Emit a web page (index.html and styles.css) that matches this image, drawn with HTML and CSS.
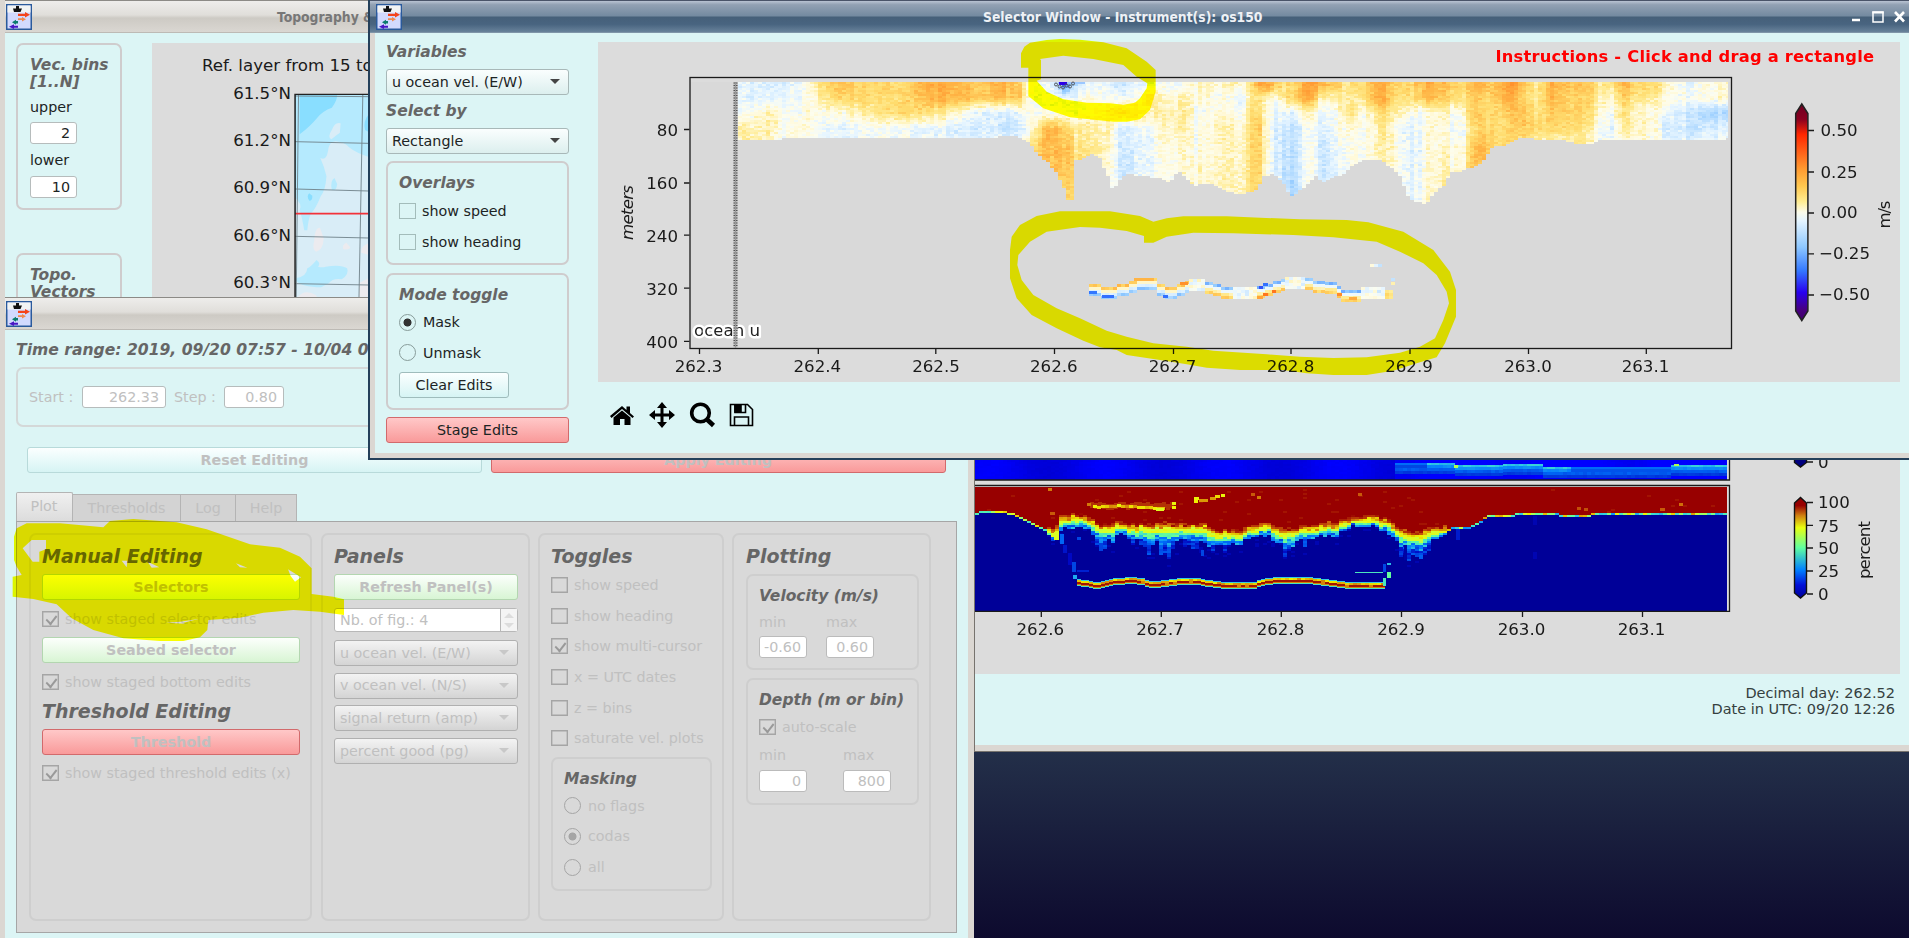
FILE: index.html
```html
<!DOCTYPE html>
<html lang="en">
<head>
<meta charset="utf-8">
<title>ADCP editing</title>
<link rel="stylesheet" href="styles.css">
</head>
<body>
<svg width="0" height="0" class="defs">
  <symbol id="app" viewBox="0 0 26 26">
    <rect x=".75" y=".75" width="24.5" height="24.5" fill="#d2dafe" stroke="#2a5a9c" stroke-width="1.5"/>
    <rect x="1.5" y="1.5" width="23" height="7" fill="#f1f3f4"/>
    <path d="M7 4.5h3V2h3v2.500h3l-1.500 3.500H8z" fill="#111"/>
    <path d="M12 9.700h7V8l5 2.800-5 2.800v-1.700h-7z" fill="#f4441c"/>
    <path d="M12 14.200h4v-1.200l4 2.200-4 2.200V16h-4z" fill="#f08a50"/>
    <path d="M12 17h-2v-1.200l-4 2.500 4 2.500v-1.300h2z" fill="#0d7d6e"/>
    <path d="M12 21.700H8V20.300l-5 2.400L8 25v-1.300h4z" fill="#4a16c4"/>
  </symbol>
</svg>
<main class="desktop">

<section class="win topo">
  <header class="bar"><svg class="ico"><use href="#app"/></svg><span class="bar-title">Topography &amp; Vectors</span></header>
  <div class="topo-body">
    <div class="topo-side">
      <div class="group vec">
        <h4>Vec. bins<br>[1..N]</h4>
        <label>upper</label><div class="field">2</div>
        <label>lower</label><div class="field">10</div>
      </div>
      <div class="group vec2"><h4>Topo.<br>Vectors</h4></div>
    </div>
    <svg class="topo-fig" width="230" height="255" viewBox="152 43 230 255">
      <rect x="152" y="43" width="230" height="255" fill="#dcdcdc"/>
      <g transform="scale(.38272 .33333)">
        <rect x="771" y="283" width="220" height="620" fill="#d9edf7"/>
        <path d="M771 283H962V470q-30-10-50-28q-10-15-35-18q-18 0-20 30q-5 30-20 20q10 25 16 55q-2 40-15 60q-14 40-25 50q-8 20-10 52h-8q-6-40-12-60q8-20-14-40z" fill="#b5eafe"/>
        <path d="M783 283h98q0 20-14 40q-24 10-38 30q-18 25-46 50z" fill="#89deff"/>
        <path d="M962 345q-14 20-8 45l8 5z" fill="#89deff"/>
        <path d="M890 370q-14-6-22 18q-14 25-2 30q12-12 22-20z" fill="#d9edf7"/>
        <path d="M874 534q-12 8-7 35q12 6 14-17z" fill="#b5eafe"/>
        <path d="M808 580q-8 8 0 22q9 0 8-15z" fill="#89deff"/>
        <path d="M771 835q30-2 32-30q10-5 24-25q12 10 4 20q12 4 20 0q40-8 56 5q6 18-14 33q-24-4-34 12q-10 6-20 12q-50 0-68-22z" fill="#b5eafe"/>
        <path d="M836 683q-14 0-15 40q-6 25 5 32q18-4 20-40z M905 728q-12 6-8 20q18 2 18-6z M962 730q-20 10-18 28l18 6z M775 895q20-30 50-10l5 10z M962 835l-24 15v40h24z" fill="#ecebef"/>
        <path d="M771 288l191 2M771 425l191 5M771 567l191 6M771 709l191 5M771 851l191 4M780 283l-6 610M948 283l-10 610" fill="none" stroke="#6f8189" stroke-width="2.500"/>
        <path d="M771 641h200" stroke="#f3323a" stroke-width="5.500"/>
        <path d="M771 900V283h200" fill="none" stroke="#222" stroke-width="4"/>
      </g>
      <g class="mpl">
        <text x="202" y="71">Ref. layer from 15 to 25</text>
        <g text-anchor="end"><text x="291" y="99">61.5°N</text><text x="291" y="146">61.2°N</text><text x="291" y="193">60.9°N</text><text x="291" y="241">60.6°N</text><text x="291" y="288">60.3°N</text></g>
      </g>
    </svg>
  </div>
</section>

<section class="win panelwin">
  <div class="fig-lower">
    <canvas id="amp" class="c-amp" width="752" height="20"></canvas>
    <canvas id="pct" class="c-pct" width="752" height="124"></canvas>
    <svg class="fig-svg" width="926" height="214" viewBox="974 460 926 214">
      <defs><linearGradient id="jet" x1="0" y1="1" x2="0" y2="0"><stop offset="0" stop-color="#000098"/><stop offset=".13" stop-color="#0010d8"/><stop offset=".28" stop-color="#0080ff"/><stop offset=".5" stop-color="#60ffa0"/><stop offset=".7" stop-color="#e8ff10"/><stop offset=".82" stop-color="#d08010"/><stop offset=".92" stop-color="#980000"/><stop offset="1" stop-color="#900000"/></linearGradient></defs>
      <path d="M974 480H1729.500V458" class="ax"/>
      <path d="M974 485.500H1729.500V611.300H974" class="ax"/>
      <path d="M1041.300 612v5M1161.300 612v5M1281.300 612v5M1401.500 612v5M1522.500 612v5M1642.500 612v5M1807 502.500h6M1807 525.300h6M1807 548h6M1807 571h6M1807 594h6M1807 462h6" class="ax"/>
      <path d="M1794.500 503l6-5.500 6 5.500v90l-6 5-6-5z" fill="url(#jet)" stroke="#111" stroke-width="1.400"/>
      <path d="M1794.500 455v7.500l6 4.500 6-4.500V455z" fill="#00007f" stroke="#111" stroke-width="1.400"/>
      <g class="mpl">
        <g text-anchor="middle"><text x="1040.300" y="634.500">262.6</text><text x="1160" y="634.500">262.7</text><text x="1280.500" y="634.500">262.8</text><text x="1401" y="634.500">262.9</text><text x="1521.500" y="634.500">263.0</text><text x="1641.500" y="634.500">263.1</text>
        <text transform="translate(1870 550) rotate(-90)" textLength="58">percent</text></g>
        <text x="1818" y="468">0</text><text x="1818" y="507.500">100</text><text x="1818" y="531.500">75</text><text x="1818" y="554">50</text><text x="1818" y="577">25</text><text x="1818" y="599.500">0</text>
      </g>
    </svg>
  </div>
  <div class="status">Decimal day: 262.52<br>Date in UTC: 09/20 12:26</div>
</section>

<section class="win control">
  <header class="bar"><svg class="ico"><use href="#app"/></svg></header>
  <div class="control-body">
    <h4 class="range">Time range: 2019, 09/20 07:57 - 10/04 07:57</h4>
    <div class="group steps off"><span>Start :</span><div class="field f1">262.33</div><span>Step :</span><div class="field f2">0.80</div></div>
    <div class="actions"><div class="btn teal off">Reset Editing</div><div class="btn red off">Apply Editing</div></div>
    <nav class="tabs off"><span class="tab on">Plot</span><span class="tab t2">Thresholds</span><span class="tab t3">Log</span><span class="tab t4">Help</span></nav>
    <div class="sheet off">
      <div class="group col c1">
        <h3>Manual Editing</h3>
        <div class="btn green">Selectors</div>
        <div class="opt"><i class="box ck"></i>show staged selector edits</div>
        <div class="btn green">Seabed selector</div>
        <div class="opt"><i class="box ck"></i>show staged bottom edits</div>
        <h3 class="thr">Threshold Editing</h3>
        <div class="btn red">Threshold</div>
        <div class="opt"><i class="box ck"></i>show staged threshold edits (x)</div>
      </div>
      <div class="group col c2">
        <h3>Panels</h3>
        <div class="btn green">Refresh Panel(s)</div>
        <div class="spin"><span>Nb. of fig.: 4</span><b><i class="up"></i><i class="dn"></i></b></div>
        <div class="combo">u ocean vel. (E/W)<i></i></div>
        <div class="combo">v ocean vel. (N/S)<i></i></div>
        <div class="combo">signal return (amp)<i></i></div>
        <div class="combo">percent good (pg)<i></i></div>
      </div>
      <div class="group col c3">
        <h3>Toggles</h3>
        <div class="opt"><i class="box"></i>show speed</div>
        <div class="opt"><i class="box"></i>show heading</div>
        <div class="opt"><i class="box ck"></i>show multi-cursor</div>
        <div class="opt"><i class="box"></i>x = UTC dates</div>
        <div class="opt"><i class="box"></i>z = bins</div>
        <div class="opt"><i class="box"></i>saturate vel. plots</div>
        <div class="group masking">
          <h4>Masking</h4>
          <div class="opt"><i class="rad"></i>no flags</div>
          <div class="opt"><i class="rad sel"></i>codas</div>
          <div class="opt"><i class="rad"></i>all</div>
        </div>
      </div>
      <div class="group col c4">
        <h3>Plotting</h3>
        <div class="group velo">
          <h4>Velocity (m/s)</h4>
          <div class="pair"><span>min</span><span>max</span><div class="field">-0.60</div><div class="field">0.60</div></div>
        </div>
        <div class="group depth">
          <h4>Depth (m or bin)</h4>
          <div class="opt"><i class="box ck"></i>auto-scale</div>
          <div class="pair wide"><span>min</span><span>max</span><div class="field">0</div><div class="field">800</div></div>
        </div>
      </div>
    </div>
  </div>
</section>

<section class="win selector">
  <header class="bar active"><svg class="ico"><use href="#app"/></svg><span class="bar-title">Selector Window - Instrument(s): os150</span>
    <svg class="ctl" width="56" height="16" viewBox="1852 9 56 16" fill="none" stroke="#fff"><path d="M1853 20h8" stroke-width="2.500"/><path d="M1874 12h10v10h-10z" stroke-width="1.500"/><path d="M1873.300 12.500h11.400" stroke-width="2"/><path d="M1896 12l9 9.500M1905 12l-9 9.500" stroke-width="2.600"/></svg>
  </header>
  <div class="sel-body">
    <div class="sel-side">
      <h4>Variables</h4>
      <div class="combo">u ocean vel. (E/W)<i></i></div>
      <h4 class="by">Select by</h4>
      <div class="combo">Rectangle<i></i></div>
      <div class="group overlays"><h4>Overlays</h4><div class="opt"><i class="box"></i>show speed</div><div class="opt"><i class="box"></i>show heading</div></div>
      <div class="group mode"><h4>Mode toggle</h4><div class="opt"><i class="rad sel"></i>Mask</div><div class="opt"><i class="rad"></i>Unmask</div><div class="btn teal">Clear Edits</div></div>
      <div class="btn red stage">Stage Edits</div>
    </div>
    <div class="sel-main">
      <div class="fig-upper">
        <canvas id="vel" class="c-vel" width="990" height="264"></canvas>
        <svg class="fig-svg" width="1302" height="340" viewBox="598 42.500 1302 340">
          <defs><linearGradient id="uv" x1="0" y1="0" x2="0" y2="1"><stop offset="0" stop-color="#6e0022"/><stop offset=".07" stop-color="#8a0020"/><stop offset=".14" stop-color="#ff2600"/><stop offset=".3" stop-color="#ff9a30"/><stop offset=".38" stop-color="#ffc850"/><stop offset=".45" stop-color="#ffec90"/><stop offset=".5" stop-color="#fbfbea"/><stop offset=".54" stop-color="#e4f4ff"/><stop offset=".66" stop-color="#8ec8ff"/><stop offset=".77" stop-color="#3478ff"/><stop offset=".87" stop-color="#2800f0"/><stop offset=".95" stop-color="#480080"/><stop offset="1" stop-color="#400068"/></linearGradient></defs>
          <g class="mpl"><text x="694" y="336.500" class="halo" textLength="66">ocean u</text></g>
          <path d="M735.500 83v265" stroke="#bbb" stroke-width="4"/>
          <path d="M735.500 83v265" stroke="#555" stroke-width="4" stroke-dasharray="1 1.500"/>
          <path d="M735.500 83v265" stroke="#999" stroke-width="1"/>
          <g fill="none" stroke="#555" stroke-width="1"><circle cx="1056" cy="85" r="1.500"/><circle cx="1059.500" cy="87" r="1.500"/><circle cx="1063" cy="88" r="1.500"/><circle cx="1066.500" cy="86" r="1.500"/><circle cx="1070" cy="87" r="1.500"/><circle cx="1073" cy="84" r="1.500"/></g>
          <rect x="690" y="78" width="1041.500" height="271" class="ax"/>
          <path d="M684 130h5.500M684 183.500h5.500M684 235.700h5.500M684 288.700h5.500M684 341.800h5.500M699.500 349v5.500M818.300 349v5.500M935.800 349v5.500M1054.500 349v5.500M1173.500 349v5.500M1291 349v5.500M1410 349v5.500M1528.500 349v5.500M1646.300 349v5.500M1808 131h6M1808 172.500h6M1808 213.500h6M1808 254.300h6M1808 295.500h6" class="ax"/>
          <path d="M1795.700 114l6.100-9.500 6.100 9.500v197.500l-6.100 9.500-6.100-9.500z" fill="url(#uv)" stroke="#222" stroke-width="1.500"/>
          <g class="mpl">
            <g text-anchor="end"><text x="678" y="136">80</text><text x="678" y="189">160</text><text x="678" y="242">240</text><text x="678" y="295">320</text><text x="678" y="348">400</text></g>
            <g text-anchor="middle"><text x="698.500" y="372">262.3</text><text x="817.300" y="372">262.4</text><text x="936" y="372">262.5</text><text x="1053.800" y="372">262.6</text><text x="1172.500" y="372">262.7</text><text x="1290.500" y="372">262.8</text><text x="1409" y="372">262.9</text><text x="1528" y="372">263.0</text><text x="1645.500" y="372">263.1</text>
            <text transform="translate(633 213) rotate(-90)" font-style="italic" textLength="55">meters</text><text transform="translate(1890 215) rotate(-90)" textLength="28">m/s</text></g>
            <text x="1820.500" y="136.500">0.50</text><text x="1820.500" y="178">0.25</text><text x="1820.500" y="218.500">0.00</text><text x="1819" y="259.500">−0.25</text><text x="1819" y="300.500">−0.50</text>
            <text x="1495.500" y="62.500" class="instr" textLength="378.500">Instructions - Click and drag a rectangle</text>
          </g>
        </svg>
      </div>
      <div class="tools">
        <svg width="26" height="24" viewBox="0 0 26 24"><path d="M1 13L13 3l4.500 4V3.500h3.500v6.500l4 3.500-1.500 1.500L13 6 2.500 15z"/><path d="M4.500 14.500L13 7.500l8.500 7V22h-6v-6h-4.500v6h-6.500z"/></svg>
        <svg width="28" height="28" viewBox="0 0 28 28"><path d="M14 1l5 6h-3.500v5.500H21V9l6 5-6 5v-3.500h-5.500V21H19l-5 6-5-6h3.500v-5.500H7V19l-6-5 6-5v3.500h5.500V7H9z"/></svg>
        <svg width="27" height="26" viewBox="0 0 27 26" fill="none" stroke="#000"><circle cx="11.500" cy="11" r="8.800" stroke-width="3.600"/><path d="M17.500 17l7 6.500" stroke-width="4.500"/></svg>
        <svg width="25" height="24" viewBox="0 0 25 24" fill="none" stroke="#000" stroke-width="1.600"><path d="M1.500 1.500h17l5 5v16h-22z"/><path d="M5.500 22v-8h14v8M6 2v7.500h10.500V2"/><path d="M6 2h6v7H6z" fill="#000"/></svg>
      </div>
    </div>
  </div>
</section>

<svg class="marker" width="1909" height="938" viewBox="0 0 1909 938" fill="#ff0" fill-rule="evenodd">
  <path transform="translate(980 30) scale(.33333)" d="M123 113V70L133 50 150 38 200 30 240 27 300 29 370 37 440 55 500 95 527 120V185L510 240 480 268 440 275H400L270 262 190 235 145 198V113ZM183 90L180 87 250 77 340 87 430 105 470 140 502 160 500 175 480 205 465 218 430 224 390 220 320 218 250 208 200 185 170 152 183 148Z"/>
  <path transform="translate(1000 220) scale(.33333)" d="M460 5L420-12 330-26H180L110-12 60 15 35 50 30 90V175L50 235 95 285 170 325 250 362 300 382 350 390 380 405 480 420 560 433 620 443 720 450H850L920 460 1000 465H1100L1180 452 1250 430 1310 412 1335 370 1368 290V210L1350 155 1300 90 1210 35 1105 7 1040 0 900-2 680-11H550L500-5ZM432 48L380 33 300 23 240 21 140 35 90 65 55 105 52 135 65 180 100 225 170 265 240 295 320 332 380 350 460 370 560 380 640 392 800 403 900 410 1000 414 1100 412 1200 398 1260 380 1305 355 1330 300 1347 250 1340 215 1310 165 1270 130 1200 95 1130 65 1000 52 880 45 700 40 580 38 500 50 460 68H432Z"/>
  <path transform="translate(0 470) scale(.33333)" d="M42 270V200L50 175 80 160H180L310 172 330 153 400 147 530 157 620 178 750 223 840 233 900 260 935 295V372L1000 380 1032 388V435L960 425 880 420 790 428 720 443 625 450 622 480 600 502 550 513H480L370 505 280 480 215 445 170 403 100 387 38 380V320L65 315 50 290ZM68 235L95 210H138V238L118 245V275H98ZM365 272L380 292 382 272ZM443 275L478 292 455 293ZM708 280L742 293 720 292ZM864 298L903 322 885 335 872 318ZM498 458L540 455 595 447 550 458 555 461Z"/>
</svg>
</main>
<script src="plots.js"></script>
</body>
</html>
```

FILE: styles.css
```css
* { box-sizing: border-box; }
body { margin: 0; font: 14.3px "DejaVu Sans", Verdana, sans-serif; color: #1c2424; }
h3, h4 { margin: 0; font-style: italic; font-weight: bold; color: #666; white-space: nowrap; }
h3 { font-size: 19px; line-height: 24px; }
h4 { font-size: 15.500px; line-height: 18px; }
.defs { position: absolute; }
.desktop { position: relative; width: 1909px; height: 938px; overflow: hidden; background: linear-gradient(#232f49 752px, #0d0a2e 938px); isolation: isolate; }
.win { position: absolute; overflow: hidden; background: #dcf5f5; }

.bar { display: flex; align-items: center; position: relative; height: 33px; padding-left: 6px; border-top: 1px solid #8c8a86; border-bottom: 1px solid #bdbab5; background: linear-gradient(#eeedeb, #e0deda 45%, #cdcac4 55%, #dad7d2); }
.bar-title { font: bold 13.800px "DejaVu Sans Condensed", "DejaVu Sans", sans-serif; font-stretch: condensed; color: #777; white-space: nowrap; }
.ico { width: 26px; height: 26px; flex: none; }
.active { border-top: 1px solid #4a5468; border-bottom: 1px solid #7f95a8; background: linear-gradient(#b9c3d2, #92a1b3 12%, #748aa0 48%, #466079 52%, #486480 75%, #68829a); }

.topo { left: 0; top: 0; width: 382px; height: 298px; border-left: 5px solid #dbd7d2; }
.topo .bar, .control .bar { margin-left: -5px; }
.topo .bar-title { margin-left: 245px; }
.topo-body { display: flex; }
.topo-side { width: 147px; padding: 10px 0 0 11px; }
.topo-fig { margin-top: 10px; flex: none; }
.group { border: 2px solid #cfcccd; border-radius: 7px; }
.vec { width: 106px; height: 167px; padding: 12px 0 0 12px; }
.vec h4, .vec2 h4 { line-height: 17.300px; }
.vec label { display: block; height: 20px; line-height: 20px; margin: 5px 0 5px; }
.vec .field + label { margin: 6px 0; }
.vec .field { width: 47px; }
.vec2 { width: 106px; height: 100px; margin-top: 43px; padding: 12px 0 0 12px; }
.field { height: 22px; line-height: 21px; padding-right: 6px; text-align: right; background: #fff; border: 1px solid #b6bcbc; border-radius: 3px; }

.mpl { font: 16.67px "DejaVu Sans", sans-serif; fill: #1a1a1a; }
.ax { fill: none; stroke: #1a1a1a; stroke-width: 1.300; }
.halo { fill: #222; stroke: #fff; stroke-width: 5px; stroke-linejoin: round; paint-order: stroke; }
.instr { font-weight: bold; font-size: 16.300px; fill: #f00; }

.panelwin { left: 974px; top: 400px; width: 935px; height: 352px; border-left: 1px solid #77736e; border-bottom: 1px solid #77736e; }
.panelwin::after { content: ""; display: block; height: 6px; margin-top: 28px; background: #dbd7d2; }
.fig-lower { position: relative; width: 925px; height: 274px; background: #dcdcdc; }
.fig-svg { position: absolute; left: 0; top: 0; }
.fig-lower .fig-svg { left: -1px; top: 60px; }
.c-amp { position: absolute; left: 0; top: 60px; }
.c-pct { position: absolute; left: 0; top: 87px; }
.status { padding: 11px 14px 0 0; text-align: right; line-height: 16px; font-size: 14.500px; color: #354040; height: 43px; }

.control { left: 0; top: 297px; width: 974px; height: 641px; border-left: 5px solid #dbd7d2; border-right: 6px solid #dbd7d2; }
.control .bar { margin-right: -6px; }
.control-body { padding: 10px 0 0 11px; }
.range { line-height: 20px; font-size: 15.600px; }
.off { color: #c0c0c0; }
.steps { display: flex; align-items: center; width: 934px; height: 60px; margin-top: 7px; padding-left: 11px; border-color: #d4d8d8; }
.f1 { width: 84px; margin: 0 8px 0 9px; }
.f2 { width: 60px; margin-left: 9px; }
.steps span { width: 44px; white-space: nowrap; }
.steps .f1 + span { width: 41px; }
.actions { display: flex; gap: 8.500px; margin: 19.500px 0 0 11px; }
.actions .btn { width: 455px; font-weight: bold; }
.btn { height: 26px; line-height: 24px; text-align: center; border: 1px solid; border-radius: 3px; white-space: nowrap; }
.teal { border-color: #9fbcbc; background: linear-gradient(#fbffff, #d6f4f4); }
.teal.off { border-color: #b8dada; }
.red { border-color: #d26a6c; background: linear-gradient(#ffc8c8, #f99a9a); }
.green { border-color: #b3d6b0; background: linear-gradient(#fcfffc, #d8f5d4); }
.sheet .btn { font-weight: bold; }

.tabs { display: flex; align-items: flex-end; height: 29px; margin-top: 19.500px; }
.tab { width: 56px; height: 27px; line-height: 27px; text-align: center; border: 1px solid #b4b4b4; border-left-width: 0; border-bottom: 0; background: #d3d3d3; }
.tab.on { width: 57px; height: 29px; border-left-width: 1px; border-radius: 2px 2px 0 0; background: linear-gradient(#f0f0f0, #dcdcdc); padding-right: 1px; }
.t2 { width: 108px; } .t3 { width: 55px; } .t4 { width: 61px; }
.sheet { display: flex; width: 941px; height: 412px; padding: 11px 0 0 12px; border: 1px solid #a6a6a6; background: #d9d9d9; }
.sheet .group { border-color: #cecece; }
.sheet h3, .sheet h4 { color: #666; }
.col { height: 388px; padding: 9px 10px 0 11px; margin-right: 8px; flex: none; }
.c1 { width: 283px; margin-right: 9px; } .c2 { width: 209px; } .c3 { width: 186px; } .c4 { width: 199px; }
.col h3 { margin-bottom: 6px; }
.opt { display: flex; align-items: center; height: 30.600px; white-space: nowrap; }
.box { position: relative; width: 17px; height: 16px; margin-right: 6px; border: 1px solid #a5a5a5; box-shadow: inset 0 0 0 .4px #a5a5a5; flex: none; }
.ck::after { content: ""; position: absolute; left: 5px; top: 1px; width: 5px; height: 9px; border: solid #999; border-width: 0 2px 2px 0; transform: rotate(38deg) skewY(8deg); }
.rad { width: 17px; height: 17px; margin-right: 7px; border: 1px solid #a5a5a5; border-radius: 50%; flex: none; }
.sel { background: radial-gradient(circle, #a5a5a5 3.600px, transparent 4.400px); }
.c1 .opt { height: 37px; }
.c1 .thr { margin: -1px 0 6px; }
.c1 .thr + .btn + .opt { height: 36px; }
.spin { display: flex; justify-content: space-between; height: 24px; margin: 8px 0 8px; padding-left: 5px; line-height: 22px; background: #fff; border: 1px solid #b8b8b8; border-radius: 3px; }
.spin b { width: 17px; padding: 4px 3px; border-left: 1px solid #b8b8b8; background: #f4f4f4; }
.spin i { display: block; border: 5px solid transparent; border-top-width: 0; border-bottom: 5px solid #dcdcdc; }
.spin .dn { margin-top: 5px; border-bottom-width: 0; border-top: 5px solid #dcdcdc; }
.combo { display: flex; justify-content: space-between; align-items: center; height: 26px; margin-bottom: 6.700px; padding: 0 8px 1px 5px; border: 1px solid #b0b0b0; border-radius: 3px; background: linear-gradient(#f3f3f3, #d4d4d4); white-space: nowrap; }
.combo i { border: 5px solid transparent; border-top-color: #c8c8c8; border-bottom: 0; }
.c3 h3 { margin-bottom: 2px; }
.c3 { padding-right: 10px; }
.masking { height: 134px; margin-top: 3px; padding: 11px 0 0 11px; }
.masking h4 { margin-bottom: 3px; }
.c4 { padding-left: 12px; }
.c4 h3 { margin-bottom: 6px; }
.velo, .depth { width: 173px; padding: 11px 0 0 11px; }
.velo { height: 96px; }
.depth { height: 127px; margin-top: 8px; }
.pair { display: grid; grid-template-columns: 48px 48px; column-gap: 19px; row-gap: 5px; margin-top: 8px; line-height: 18px; }
.pair.wide { column-gap: 36px; margin-top: 1px; row-gap: 6px; }
.depth .opt { height: 36px; }
.pair .field { padding-right: 5px; border-color: #bbb; line-height: 20px; }

.selector { left: 368px; top: 0; width: 1541px; height: 460px; border-left: 2px solid #24405a; border-bottom: 2px solid #24405a; }
.selector .bar-title { position: absolute; left: 613px; top: 8px; color: #eef1f5; }
.ctl { margin-left: auto; margin-right: 2px; }
.sel-body { display: flex; height: 425px; border-left: 5px solid #dbd7d2; border-bottom: 5px solid #dbd7d2; padding: 9px 0 0 11px; }
.sel-side { width: 183px; margin-right: 29px; padding-top: 1px; flex: none; }
.sel-side .combo { margin-bottom: 0; background: linear-gradient(#fafefe, #dcefee); border-color: #a8b8b8; }
.sel-side .combo i { border-top-color: #444; }
.sel-side > h4 { height: 26px; line-height: 19px; }
.sel-side > h4.by { height: 33px; padding-top: 7px; }
.sel-side .box { border-color: #a3bcba; box-shadow: none; }
.sel-side .rad { border-color: #889c9a; margin-right: 7px; }
.sel-side .sel { background: radial-gradient(circle, #333 3.600px, transparent 4.400px); }
.overlays { height: 104px; margin-top: 7px; padding: 11px 0 0 11px; }
.overlays h4 { margin-bottom: 4px; }
.mode { height: 137px; margin-top: 8px; padding: 11px 0 0 11px; }
.mode h4 { margin-bottom: 3px; }
.mode .btn { width: 110px; margin-top: 4px; }
.stage { margin-top: 7px; }
.fig-upper { position: relative; width: 1302px; height: 340px; background: linear-gradient(#d9d9d9, #d9d9d9) 92px 40px / 1041px 266px no-repeat, #dcdcdc; }
.c-vel { position: absolute; left: 140px; top: 40px; }
.tools { display: flex; align-items: center; gap: 13px; height: 28px; margin: 19px 0 0 11px; }

.marker { position: absolute; left: 0; top: 0; mix-blend-mode: multiply; pointer-events: none; }
```

FILE: plots.js
```js
var seed = 7;
function rnd() { seed = (seed * 1664525 + 1013904223) >>> 0; return seed / 4294967296; }
function noise(a) { return (rnd() + rnd() - 1) * a; }

// Piecewise linear lookup in [[x, v...], ...]
function lerp(t, x, k) {
  if (x <= t[0][0]) return t[0][k];
  for (var i = 1; i < t.length; i++) {
    if (x <= t[i][0]) {
      var f = (x - t[i - 1][0]) / (t[i][0] - t[i - 1][0]);
      return t[i - 1][k] + f * (t[i][k] - t[i - 1][k]);
    }
  }
  return t[t.length - 1][k];
}
function color(map, v) {
  return 'rgb(' + [1, 2, 3].map(function (k) { return Math.round(lerp(map, v, k)); }).join(',') + ')';
}
var UV = [[-.6, 60, 0, 200], [-.5, 40, 0, 240], [-.35, 52, 120, 255], [-.2, 142, 200, 255], [-.08, 205, 232, 255], [-.03, 232, 246, 255], [.01, 253, 253, 238],
  [.05, 255, 249, 215], [.1, 255, 236, 150], [.16, 255, 220, 110], [.24, 255, 184, 72], [.35, 255, 145, 44], [.5, 255, 60, 0]];
var JET = [[0, 0, 0, 152], [.1, 0, 8, 195], [.28, 0, 120, 255], [.4, 50, 205, 225], [.5, 100, 255, 155], [.65, 215, 255, 40], [.72, 240, 240, 0], [.85, 205, 100, 10], [.95, 152, 0, 0], [1, 152, 0, 0]];

// x, seabed, velocity at depth rows 84, 97, 112, 128, 150, 180
var FIELD = [
  [738,139,-.05,-.04,-.01,.08,.08,0],[760,139,-.04,-.03,.06,.09,.08,0],[775,139,-.06,-.03,.06,.06,0,0],[782,138,-.04,-.03,0,0,0,0],[793,138,-.01,-.01,.01,.07,0,0],
  [806,137,.01,.02,.03,.02,0,0],[818,136,.14,.1,.02,-.01,0,0],[842,137,.22,.17,.03,-.05,0,0],[858,138,.17,.16,.08,.0,0,0],[880,138,.17,.15,.13,-.01,0,0],
  [905,138,.15,.15,.16,-.02,0,0],[915,138,.24,.22,.16,-.03,0,0],[940,138,.26,.25,.1,-.05,0,0],[965,138,.22,.23,.01,-.07,0,0],[985,138,.19,.18,-.05,-.06,0,0],
  [1000,136,.26,.24,-.07,-.09,0,0],[1018,136,.18,.17,-.03,-.09,0,0],[1023,138,.05,.06,.0,-.05,.1,.1],[1030,142,.03,.01,.01,.06,.15,.15],[1040,156,-.02,.0,.01,.17,.22,.2],
  [1048,161,-.03,-.01,.01,.24,.22,.2],[1056,172,-.1,-.02,.02,.22,.23,.2],[1063,184,-.35,-.04,.0,.16,.2,.18],[1068,199,-.2,-.03,-.01,.15,.22,.18],[1072,199,-.12,-.02,0,.1,.17,.15],[1073.5,160,-.1,0,.01,.1,.13,.1],
  [1082,158,-.04,.03,.03,.11,.13,.1],[1090,153,-.02,.02,.05,.08,.1,.1],[1100,158,-.02,.01,.06,.08,.08,.1],[1108,175,-.04,.01,.09,.07,.03,.02],[1113,190,-.08,0,.1,.0,-.01,0],[1118,182,-.09,-.01,.13,-.08,-.09,-.09],
  [1127,172,-.05,.01,.14,-.04,-.06,-.06],[1140,176,-.02,.04,.1,-.01,-.03,-.02],[1148,176,0,.18,.09,0,-.01,0],[1160,178,.01,.04,.07,.05,.02,.01],[1170,182,-.02,.04,.07,.05,.03,0],[1178,170,-.03,.06,.09,.07,.04,.03],
  [1186,176,.02,.08,.08,.07,.04,.03],[1194,185,.03,.03,-.01,0,.01,.04],[1205,182,.09,.05,.01,.04,.04,.05],[1215,184,.04,0,.05,.08,.06,.07],[1230,191,.07,.0,.02,.06,.06,.06],[1240,194,.06,-.03,.0,.05,.07,.07],
  [1248,192,.1,.09,.12,.13,.13,.13],[1258,188,.28,.13,.17,.2,.17,.17],[1264,175,.3,.06,.04,.05,.05,0],[1275,173,.18,.03,-.02,-.05,-.06,-.03],[1283,182,.12,.1,-.06,-.1,-.12,-.13],[1291,196,.15,.18,-.04,-.08,-.1,-.12],
  [1300,189,.25,.24,.03,-.04,-.05,-.04],[1309,183,.32,.3,.07,.01,.03,.02],[1317,175,.25,.11,-.02,-.03,-.06,-.04],[1322,182,.22,.08,-.03,-.05,-.1,-.1],[1332,177,.22,.07,.0,.0,-.03,-.04],[1343,173,.1,.1,.1,.02,.0,-.02],
  [1354,163,.17,.09,.1,.03,.02,0],[1362,160,.18,.15,.03,.02,.03,0],[1372,160,.24,.23,.09,.03,.05,0],[1382,160,.28,.28,.17,.12,.1,.06],[1392,168,.18,.15,.09,.04,.06,.06],[1400,176,.14,.13,.07,-.04,-.02,-.01],[1409,198,.15,.12,-.01,-.06,-.05,-.06],
  [1418,201,.22,.18,.0,-.01,-.02,0],[1426,204,.27,.23,.03,.05,.05,.07],[1433,193,.25,.23,.07,.05,.05,.05],[1445,184,.23,.18,.07,.04,.06,.1],[1451,172,.21,.15,.01,.0,.03,.05],[1462,170,.14,.13,.05,-.01,.05,.05],[1470,167,.24,.2,.2,.14,.22,.2],
  [1482,163,.24,.17,.17,.17,.24,.2],[1492,147,.19,.16,.14,.15,.15,.1],[1500,145,.24,.22,.14,.13,.15,.1],[1510,143,.33,.28,.22,.19,.15,.1],[1520,138,.23,.17,.22,.2,.1,0],[1535,138,.1,.08,.12,.15,0,0],[1550,139,.27,.25,.2,.17,0,0],
  [1565,140,.2,.18,.17,.15,0,0],[1578,143,.2,.17,.17,.13,.08,0],[1590,143,.2,.19,.14,.1,.05,0],[1598,140,.11,.06,.03,-.01,0,0],[1612,140,.13,.09,.01,-.02,0,0],[1622,139,.26,.18,.14,.1,0,0],[1635,139,.17,.12,.06,.08,0,0],[1655,140,.16,.09,.04,.03,0,0],
  [1662,139,.07,.04,-.01,-.08,0,0],[1675,139,.0,.0,-.05,-.05,0,0],[1690,140,-.03,.0,-.1,-.1,0,0],[1705,139,.03,.03,-.14,-.05,0,0],[1728,138,.07,.05,-.12,-.03,0,0]];
var ROWS = [84, 97, 112, 128, 150, 180];
function velocityAt(x, y) {
  var i = 0;
  while (i < 4 && y > ROWS[i + 1]) i++;
  var f = Math.max(0, Math.min(1, (y - ROWS[i]) / (ROWS[i + 1] - ROWS[i])));
  return lerp(FIELD, x, i + 2) * (1 - f) + lerp(FIELD, x, i + 3) * f;
}
var vel = document.getElementById('vel').getContext('2d');
for (var x = 738; x < 1728; x += 4) {
  var col = noise(.03), bed = lerp(FIELD, x + 2, 1);
  for (var y = 82; y < bed; y += 2) {
    vel.fillStyle = color(UV, velocityAt(x, y) + col + noise(.05));
    vel.fillRect(x - 738, y - 82, 4, 2);
  }
}
vel.fillStyle = '#2a00e8';
vel.fillRect(1059 - 738, 0, 8, 3);
vel.fillStyle = '#9cc8ff';
vel.fillRect(1067 - 738, 0, 18, 2);

// Interference layer: x, top, sign of the top row (+ warm above, - cold above, 0 mixed patch)
var LAYER = [[1089,284,1],[1101,287,1],[1113,287,1],[1118,284,1],[1128,281,1],[1135,278,1],[1152,278,1],[1157,284,1],[1165,287,1],[1176,284,1],[1184,281,1],[1188,279,0],[1206,282,-1],[1214,284,-1],[1222,287,-1],[1233,287,0],[1258,286,-1],[1266,284,-1],[1272,281,-1],[1280,279,-1],[1284,277,0],[1305,278,-1],[1312,281,-1],[1325,282,-1],[1335,286,-1],[1342,290,-1],[1358,290,-1],[1362,287,0],[1383,290,1],[1393,290,1]];
for (x = 1089; x < 1393; x += 4) {
  var n = LAYER.filter(function (p) { return p[0] <= x + 1; }).pop(), s = n[2];
  for (var r = 0; r < (s ? 4 : 4); r++) {
    var v = s ? s * [.2, .02, -.05, -.17][r] * (.8 + rnd() * .5) : noise(.09);
    if (s > 0 && r === 1) v = .06;
    if (s < 0 && r === 2) v = .07 + rnd() * .05;
    if (x > 1382) v = .08 + rnd() * .1;
    if (x > 1382 && r > 2) continue;
    vel.fillStyle = color(UV, v);
    vel.fillRect(x - 738, n[1] - 82 + r * 3, 4, 3);
  }
}
[[1089,291,8,-.35],[1102,295,12,-.36],[1163,295,5,-.36],[1180,282,8,.35],[1134,278,20,.25],[1259,286,4,-.4],[1263,283,5,-.36],[1257,296,6,.3],[1263,293,5,.4],[1272,290,4,.4],[1337,293,5,.36],[1349,297,8,.28],
 [1370,264,4,.04],[1374,264,4,-.04],[1378,264,4,-.1],[1391,278,4,-.1],[1391,282,4,.08]].forEach(function (p) {
  vel.fillStyle = color(UV, p[3]);
  vel.fillRect(p[0] - 738, p[1] - 82, p[2], 3);
});

// Percent good: x, boundary, thickness of the transition
var EDGE = [[975,513,1],[985,511.5,1],[1003,512,1],[1015,515,1],[1030,523,1],[1040,528,1],[1050,533,3],[1054,536,7],[1056,523,8],[1068,520,6],[1075,518,5],[1086,520,5],[1095,528,8],[1106,530,10],[1116,526,7],[1125,529,5],[1150,529,10],[1163,527,11],[1180,529,7],[1200,528,9],[1212,534,8],[1238,536,5],[1250,529,5],[1264,527,5],[1278,534,8],[1292,534,8],[1305,529,7],[1335,528,5],[1348,522,4],[1375,520.5,4],[1385,524,6],[1394,531,8],[1405,536,8],[1417,538,7],[1430,532,7],[1440,531,3],[1447,529,1],[1467,528,1],[1480,521,1],[1485,516.5,1],[1510,515.5,1],[1515,513,1],[1535,514.5,1],[1580,515.5,1],[1600,514.5,1],[1726,515,1]];
var pct = document.getElementById('pct').getContext('2d');
for (x = 975; x < 1726; x += 4) {
  var b = lerp(EDGE, x, 1), t = lerp(EDGE, x, 2) * (1 + noise(.4)), shift = t > 3 ? noise(2) : 0;
  var thin = t < 2, edgeRow = 487 + 2 * Math.floor((b - 487) / 2), haze = t > 7 && rnd() < .6;
  for (y = 487; y < 611; y += 2) {
    var d = (y - b - shift) / t;
    if (thin) v = y < edgeRow ? (rnd() < .01 ? .93 : 1) : y === edgeRow ? .3 + rnd() * .5 : 0;
    else if (y < b + shift - 6) v = rnd() < .025 ? .93 : 1;
    else if (y < b + shift - 3.500) v = .9 + noise(.06);
    else if (y < b + shift - 1) v = .78 + noise(.08);
    else if (d < .35) v = .66 + noise(.05);
    else if (d < .75) v = .48 + noise(.06);
    else if (d < 1.3) v = .3 + noise(.12);
    else if (d < 2.2 && haze) v = .1 + rnd() * .14;
    else v = rnd() < .1 && d < 3 ? .06 : 0;
    pct.fillStyle = color(JET, v);
    pct.fillRect(x - 975, y - 487, 4, 2);
  }
}
function cell(ctx, map, ox, oy, x, y, w, h, v) { ctx.fillStyle = color(map, v); ctx.fillRect(x - ox, y - oy, w, h); }
for (x = 1090; x < 1172; x += 4) cell(pct, JET, 975, 487, x, 502 + Math.floor(rnd() * 3), 4, 6, .9);
for (x = 1093; x < 1165; x += 4) cell(pct, JET, 975, 487, x, Math.round(504 + Math.abs(x - 1115) / 20 + rnd()), 4, 3, .7 + rnd() * .12);
[[1156,508,8,.66],[1172,502,4,.7],[1172,506,4,.72],[1194,497,5,.7],[1194,500,4,.72],[1199,499,9,.8],[1210,497,6,.8],[1215,495,5,.74],[1221,494,4,.7],[1251,493,4,.86],[1257,496,4,.83],[1048,488,4,.83],[1050,512,5,.86],[1087,503,4,.83],[1358,493,4,.86],[1679,503,4,.84],[1660,508,5,.86],[1577,507,4,.87],[1584,508,4,.87]].forEach(function (p) {
  cell(pct, JET, 975, 487, p[0], p[1], p[2], 3, p[3]);
});
var BAND = [[1077,582],[1095,585],[1110,581.5],[1130,580],[1140,581],[1150,584.5],[1165,582.5],[1180,581],[1195,581],[1205,583],[1222,585],[1252,585],[1265,581],[1283,579.5],[1310,580.5],[1330,583],[1345,585],[1383,585]];
for (x = 1077; x < 1384; x += 4) {
  y = Math.round(lerp(BAND, x, 1));
  cell(pct, JET, 975, 487, x, y - 3, 4, 1, .4);
  cell(pct, JET, 975, 487, x, y - 2, 4, 2, .72 + rnd() * .1);
  cell(pct, JET, 975, 487, x, y, 4, 2, rnd() < .15 ? .82 : .93);
  cell(pct, JET, 975, 487, x, y + 2, 4, 1, .82);
  cell(pct, JET, 975, 487, x, y + 3, 4, 1, .45);
}
[[1054,532,5,8,.66],[1060,534,4,10,.25],[1063,545,4,8,.12],[1068,553,4,12,.1],[1072,562,4,10,.2],[1073,575,4,4,.35],[1077,570,12,2,.14],[1077,537,4,3,.2],[1201,550,3,6,.2],[1355,572,28,1,.45],[1383,564,3,8,.2],[1383,578,3,8,.45],[1387,563,4,2,.38],[1387,572,4,6,.5],[1456,529,4,11,.13],[1533,516,4,9,.06],[1533,552,4,7,.06],[1404,545,3,15,.03]].forEach(function (p) {
  cell(pct, JET, 975, 487, p[0], p[1], p[2], p[3], p[4]);
});

// Signal return strip
var amp = document.getElementById('amp').getContext('2d');
for (x = 975; x < 1726; x += 4) {
  var base = 212 + Math.round(36 * Math.pow(Math.sin(x / 37), 2));
  for (y = 0; y < 20; y += 2) {
    amp.fillStyle = 'rgb(0,0,' + Math.min(255, base + Math.round(rnd() * 8) + (x > 1391 ? 25 : 0)) + ')';
    amp.fillRect(x - 975, y, 4, 2);
  }
  if (x > 1391) {
    var far = x > 1568 && x < 1668, yy = x < 1455 ? 3 : x < 1500 ? 5 : x < 1542 ? 4 : x < 1668 ? 7 : 5;
    cell(amp, JET, 975, 0, x, yy, 4, 2, x < 1425 ? .26 : far ? .26 : .36 + rnd() * .06);
    cell(amp, JET, 975, 0, x, yy + 2, 4, 3, x < 1425 ? .2 : far ? .22 : .29 + rnd() * .03);
    cell(amp, JET, 975, 0, x, yy + 5, 4, 3, .22 + rnd() * .03);
    cell(amp, JET, 975, 0, x, yy + 8, 4, 3, .17 + rnd() * .02);
  }
}
cell(amp, JET, 975, 0, 1454, 5, 4, 3, .6);
cell(amp, JET, 975, 0, 1674, 4, 5, 2, .6);
```
